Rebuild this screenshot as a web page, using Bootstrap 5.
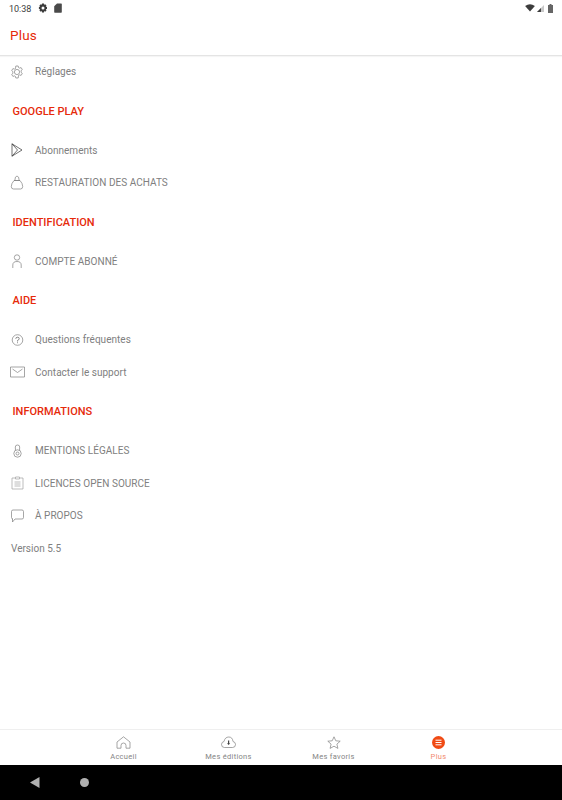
<!DOCTYPE html>
<html lang="fr">

<head>
  <meta charset="UTF-8">
  <meta name="viewport" content="width=device-width, initial-scale=1.0">
  <title>Plus</title>
  <link href="https://cdn.jsdelivr.net/npm/bootstrap@5.3.3/dist/css/bootstrap.min.css" rel="stylesheet">
  <style>
    body {
      font-family: Roboto, sans-serif;
      background: #fff;
    }

    .app-screen {
      height: 800px;
    }

    .status-strip {
      height: 16px;
      padding: 0 9px 0 9px;
      font-size: 9px;
      color: #3c3c3c;
    }

    .status-time {
      margin-right: 7px;
      padding-top: 2px;
      line-height: 1;
    }

    .status-gear {
      margin-right: 6px;
    }

    .status-wifi {
      margin-right: 2px;
    }

    .title-strip {
      height: 39.5px;
      padding-left: 10px;
      font-size: 13.5px;
      letter-spacing: .2px;
      color: #e62a0a;
      border-bottom: 1px solid #e4e4e4;
      box-shadow: 0 1px 1px rgba(0, 0, 0, .04);
    }

    .menu-row {
      height: 32.5px;
      font-size: 10px;
      letter-spacing: .03px;
      color: #808080;
    }

    .menu-icon {
      width: 35px;
      padding-left: 10px;
      flex-shrink: 0;
    }

    .menu-icon svg {
      display: block;
      fill: none;
      stroke: #808080;
      stroke-width: .7;
    }

    .group-title {
      height: 46px;
      padding: 2px 0 0 12.5px;
      font-size: 11px;
      font-weight: 500;
      color: #e62a0a;
    }

    .version-line {
      height: 32px;
      padding-left: 11px;
      font-size: 10px;
      color: #808080;
    }

    .tab-strip {
      height: 36px;
      padding: 0 71px;
      border-top: 1px solid #efefef;
    }

    .tab-item {
      width: 105px;
      font-size: 7.5px;
      letter-spacing: .3px;
      line-height: 9px;
      color: #858585;
    }

    .tab-item svg {
      display: block;
      margin: 6px 0 2.5px;
      fill: none;
      stroke: #808080;
      stroke-width: .7;
    }

    .tab-active {
      color: #f28a70;
    }

    .android-nav {
      height: 35px;
      padding-left: 30px;
      gap: 40px;
      background: #000;
    }
  </style>
</head>

<body>
  <div class="app-screen d-flex flex-column">
    <div class="status-strip d-flex align-items-center justify-content-between">
      <div class="d-flex align-items-center">
        <span class="status-time">10:38</span>
        <svg width="10" height="10" viewBox="0 0 10 10" class="status-gear">
          <path fill="#3c3c3c" fill-rule="evenodd" d="M4 .5h2l.2 1.300 1-.5 1.300 1.300-.7 1 1.200.4v2l-1.200.3.7 1.100-1.300 1.300-1-.6L6 9.500H4l-.2-1.400-1 .6-1.400-1.300.7-1.100L.9 6V4l1.200-.4-.7-1 1.400-1.300 1 .5zM5 3.500a1.500 1.500 0 1 0 0 3 1.500 1.500 0 0 0 0-3z" />
        </svg>
        <svg width="8" height="10" viewBox="0 0 8 10">
          <path fill="#4a4a4a" d="M3 .5h4.200q.6 0 .6.6v8q0 .6-.6.6H.8q-.6 0-.6-.6V3.300z" />
        </svg>
      </div>
      <div class="d-flex align-items-center">
        <svg width="10" height="8" viewBox="0 0 11 9" class="status-wifi">
          <path fill="#3c3c3c" d="M0 2.200Q5.500-1.800 11 2.200L5.500 8.500z" />
        </svg>
        <svg width="7" height="7" viewBox="0 0 8 8">
          <path fill="#c8c8c8" d="M8 0v8H0z" />
          <path fill="#3c3c3c" d="M4.500 3.500V8H0z" />
        </svg>
        <svg width="5" height="9" viewBox="0 0 5 9" class="ms-1">
          <path fill="#666" d="M1.500 0h2v1H5v8H0V1h1.500z" />
        </svg>
      </div>
    </div>

    <div class="title-strip d-flex align-items-center">Plus</div>

    <div class="flex-grow-1">
      <div class="menu-row d-flex align-items-center">
        <div class="menu-icon">
          <svg width="14" height="14" viewBox="0 0 14 14">
            <path d="M5.800 1h2.400l.3 1.500 1.100.6 1.500-.5 1.200 2-1.200 1v1.800l1.200 1-1.200 2-1.500-.5-1.100.6L8.200 13H5.800l-.3-1.500-1.100-.6-1.500.5-1.200-2 1.200-1V6.600l-1.200-1 1.200-2 1.500.5 1.100-.6z" stroke-linejoin="round" />
            <circle cx="7" cy="7" r="2.600" />
          </svg>
        </div>
        <span>Réglages</span>
      </div>

      <div class="group-title d-flex align-items-center">GOOGLE PLAY</div>
      <div class="menu-row d-flex align-items-center">
        <div class="menu-icon">
          <svg width="13" height="14" viewBox="0 0 13 14">
            <path stroke="#333" d="M2 .8 12 7 2 13.200zM2 .8 7.500 7 2 13.200" />
          </svg>
        </div>
        <span>Abonnements</span>
      </div>
      <div class="menu-row d-flex align-items-center">
        <div class="menu-icon">
          <svg width="14" height="15" viewBox="0 0 14 15">
            <path d="M4 5.500Q1.300 8.500 1.300 11.500 1.300 14 3.500 14h7q2.200 0 2.200-2.500 0-3-2.700-6zM4 5.500h6M4.800 5.500Q5 1 7 1t2.200 4.500" />
          </svg>
        </div>
        <span>RESTAURATION DES ACHATS</span>
      </div>

      <div class="group-title d-flex align-items-center">IDENTIFICATION</div>
      <div class="menu-row d-flex align-items-center">
        <div class="menu-icon">
          <svg width="14" height="14" viewBox="0 0 14 14">
            <circle cx="7" cy="3.500" r="2.700" />
            <path d="M2.800 14v-3Q2.800 7.500 7 7.500t4.200 3.500v3" />
          </svg>
        </div>
        <span>COMPTE ABONNÉ</span>
      </div>

      <div class="group-title d-flex align-items-center">AIDE</div>
      <div class="menu-row d-flex align-items-center">
        <div class="menu-icon">
          <svg width="14" height="14" viewBox="0 0 14 14">
            <circle cx="7.500" cy="7" r="5.300" />
            <path stroke="#555" d="M5.800 5.800Q5.800 4.200 7.500 4.200t1.700 1.500Q9.200 6.800 7.500 7.500v1M7.500 9.300v.9" />
          </svg>
        </div>
        <span>Questions fréquentes</span>
      </div>
      <div class="menu-row d-flex align-items-center">
        <div class="menu-icon">
          <svg width="15" height="12" viewBox="0 0 15 12">
            <path d="M.5 1h14v10H.5zM2.500 3 7.500 6.500 12.500 3" />
          </svg>
        </div>
        <span>Contacter le support</span>
      </div>

      <div class="group-title d-flex align-items-center">INFORMATIONS</div>
      <div class="menu-row d-flex align-items-center">
        <div class="menu-icon">
          <svg width="14" height="14" viewBox="0 0 14 14">
            <circle cx="7.500" cy="9.500" r="3.700" />
            <circle cx="7.500" cy="9.500" r="1.500" />
            <path d="M5.500 6.300 5.300 3Q5.300 1 7.500 1t2.200 2L9.500 6.300" />
          </svg>
        </div>
        <span>MENTIONS LÉGALES</span>
      </div>
      <div class="menu-row d-flex align-items-center">
        <div class="menu-icon">
          <svg width="14" height="14" viewBox="0 0 14 14">
            <path stroke="#a0a0a0" d="M5.500 2H2v11h11V2H9.500M5.500 1h4v2h-4zM4.500 6h6M4.500 8h6M4.500 10h6" />
          </svg>
        </div>
        <span>LICENCES OPEN SOURCE</span>
      </div>
      <div class="menu-row d-flex align-items-center">
        <div class="menu-icon">
          <svg width="14" height="14" viewBox="0 0 14 14">
            <path d="M3 1h9q1.500 0 1.500 1.500v6Q13.500 10 12 10H5l-2.500 3V10H3q-1.500 0-1.500-1.500v-6Q1.500 1 3 1z" />
          </svg>
        </div>
        <span>À PROPOS</span>
      </div>
      <div class="version-line d-flex align-items-center">Version 5.5</div>
    </div>

    <div class="tab-strip d-flex">
      <div class="tab-item d-flex flex-column align-items-center">
        <svg width="15" height="13" viewBox="0 0 15 13">
          <path d="M1 6 7.500.8 14 6v6.200h-4V9.500Q10 7 7.500 7T5 9.500v2.700H1z" />
        </svg>
        <span>Accueil</span>
      </div>
      <div class="tab-item d-flex flex-column align-items-center">
        <svg width="15" height="13" viewBox="0 0 15 13">
          <path d="M4 11.500H3.500Q.5 11.500.5 8.500.5 6 3 5.500 4 1 7.800 1 11.500 1 12 5.500q2.500.5 2.500 3 0 3-3 3z" />
          <path fill="#444" stroke="none" d="M7 4.500h1.200v2.700H9.200L7.600 9 6 7.200h1z" />
        </svg>
        <span>Mes éditions</span>
      </div>
      <div class="tab-item d-flex flex-column align-items-center">
        <svg width="14" height="13" viewBox="0 0 14 13">
          <path d="M7 .8 8.800 4.800l4.400.4-3.300 2.900 1 4.300L7 10.200 3.100 12.400l1-4.300L.8 5.200l4.400-.4z" />
        </svg>
        <span>Mes favoris</span>
      </div>
      <div class="tab-item tab-active d-flex flex-column align-items-center">
        <svg width="13" height="13" viewBox="0 0 13 13">
          <circle cx="6.500" cy="6.500" r="6.500" fill="#f04a14" stroke="none" />
          <path stroke="#fff" stroke-width="1" d="M3.500 4.200h6M3.500 6.500h6M3.500 8.800h6" />
        </svg>
        <span>Plus</span>
      </div>
    </div>

    <div class="android-nav d-flex align-items-center">
      <svg width="10" height="11" viewBox="0 0 10 11">
        <path fill="#b0b0b0" d="M9.500 0v11L0 5.500z" />
      </svg>
      <svg width="9" height="9" viewBox="0 0 9 9">
        <circle cx="4.500" cy="4.500" r="4.500" fill="#b0b0b0" />
      </svg>
    </div>
  </div>

  <script src="https://cdn.jsdelivr.net/npm/bootstrap@5.3.3/dist/js/bootstrap.bundle.min.js"></script>
</body>

</html>
